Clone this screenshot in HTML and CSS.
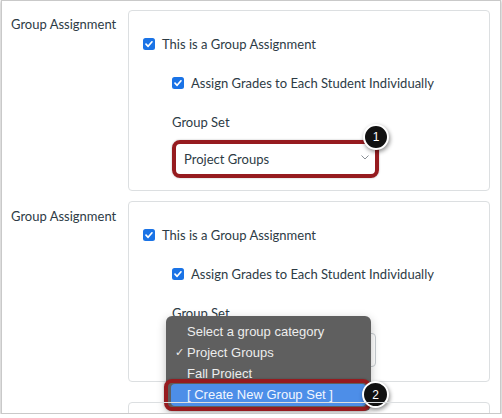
FILE: index.html
```html
<!DOCTYPE html>
<html>
<head>
<meta charset="utf-8">
<link rel="stylesheet" href="styles.css">
</head>
<body>
<div class="frame">
  <div class="row row1">
    <div class="label">Group Assignment</div>
    <div class="box">
      <div class="check lvl1">
        <svg class="cb" width="12" height="12" viewBox="0 0 12 12"><rect x="0" y="0" width="12" height="12" rx="2.5" fill="#1a73e6"/><path d="M3 6.2 L5.1 8.3 L9 3.8" fill="none" stroke="#fff" stroke-width="1.7" stroke-linecap="round" stroke-linejoin="round"/></svg>
        <span>This is a Group Assignment</span>
      </div>
      <div class="check lvl2">
        <svg class="cb" width="12" height="12" viewBox="0 0 12 12"><rect x="0" y="0" width="12" height="12" rx="2.5" fill="#1a73e6"/><path d="M3 6.2 L5.1 8.3 L9 3.8" fill="none" stroke="#fff" stroke-width="1.7" stroke-linecap="round" stroke-linejoin="round"/></svg>
        <span>Assign Grades to Each Student Individually</span>
      </div>
      <div class="setlabel">Group Set</div>
      <div class="selectwrap">
        <div class="select">
          <span>Project Groups</span>
          <svg class="chev" width="8" height="5" viewBox="0 0 8 5"><path d="M0.5 0.5 L4 4 L7.5 0.5" fill="none" stroke="#8a9096" stroke-width="1"/></svg>
        </div>
        <div class="ring ring1"></div>
        <div class="badge badge1">1</div>
      </div>
    </div>
  </div>

  <div class="row row2">
    <div class="label">Group Assignment</div>
    <div class="box">
      <div class="check lvl1">
        <svg class="cb" width="12" height="12" viewBox="0 0 12 12"><rect x="0" y="0" width="12" height="12" rx="2.5" fill="#1a73e6"/><path d="M3 6.2 L5.1 8.3 L9 3.8" fill="none" stroke="#fff" stroke-width="1.7" stroke-linecap="round" stroke-linejoin="round"/></svg>
        <span>This is a Group Assignment</span>
      </div>
      <div class="check lvl2">
        <svg class="cb" width="12" height="12" viewBox="0 0 12 12"><rect x="0" y="0" width="12" height="12" rx="2.5" fill="#1a73e6"/><path d="M3 6.2 L5.1 8.3 L9 3.8" fill="none" stroke="#fff" stroke-width="1.7" stroke-linecap="round" stroke-linejoin="round"/></svg>
        <span>Assign Grades to Each Student Individually</span>
      </div>
      <div class="setlabel">Group Set</div>
      <div class="selectwrap">
        <div class="select">
          <span>Project Groups</span>
          <svg class="chev" width="8" height="5" viewBox="0 0 8 5"><path d="M0.5 0.5 L4 4 L7.5 0.5" fill="none" stroke="#8a9096" stroke-width="1"/></svg>
        </div>
      </div>
      <div class="menu">
        <div class="item">Select a group category</div>
        <div class="item"><span class="tick">✓</span>Project Groups</div>
        <div class="item">Fall Project</div>
        <div class="item hl">[ Create New Group Set ]</div>
      </div>
      <div class="ring ring2"></div>
      <div class="badge badge2">2</div>
    </div>
  </div>

  <div class="row row3">
    <div class="label"></div>
    <div class="box"></div>
  </div>
</div>
</body>
</html>
```

FILE: styles.css
```css
html, body {
  margin: 0;
  padding: 0;
  background: #fff;
}
body {
  font-family: Lato, "Open Sans", sans-serif;
  color: #2d3b45;
}
.frame {
  margin-left: 1px;
  width: 498px;
  height: 412px;
  border: 1px solid #c9c9c9;
  overflow: hidden;
  box-shadow: 0 1px 3px rgba(0, 0, 0, 0.35);
  background: #fff;
  position: relative;
}
.row {
  display: grid;
  grid-template-columns: 126px 362px;
}
.row1 { margin-top: 9px; }
.row2 { margin-top: 10px; }
.row3 { margin-top: 20px; }
.label {
  font-size: 13px;
  line-height: 18px;
  padding-left: 9px;
  margin-top: 5px;
}
.row2 .label { margin-top: 6px; }
.box {
  position: relative;
  height: 181px;
  box-sizing: border-box;
  border: 1px solid #dcdfe1;
  border-radius: 4px;
  padding-top: 23px;
}
.row3 .box { height: 60px; }
.check {
  display: flex;
  align-items: center;
  gap: 7px;
  font-size: 13px;
  line-height: 20px;
}
.cb { flex: none; }
.lvl1 { margin-left: 14px; }
.lvl2 { margin-left: 43px; margin-top: 19px; }
.setlabel {
  margin-left: 43px;
  margin-top: 19px;
  font-size: 13px;
  line-height: 20px;
}
.selectwrap {
  position: relative;
  margin-left: 46px;
  margin-top: 10px;
  width: 201px;
}
.select {
  box-sizing: border-box;
  height: 34px;
  border: 1px solid #c7cdd1;
  border-radius: 4px;
  display: flex;
  align-items: center;
  justify-content: space-between;
  padding: 0 6px 0 8px;
  font-size: 13px;
}
.chev { margin-top: -3px; }
.ring {
  position: absolute;
  box-sizing: border-box;
  border: 4px solid #961b1f;
  border-radius: 8px;
  box-shadow: 0 0 2px rgba(0, 0, 0, 0.3);
}
.ring1 {
  left: -3px;
  top: -2px;
  width: 207px;
  height: 38px;
}
.badge {
  position: absolute;
  box-sizing: border-box;
  border-radius: 50%;
  background: #111;
  border: 2px solid #fff;
  color: #fff;
  font-family: "Liberation Sans", Arial, sans-serif;
  font-size: 12px;
  display: flex;
  align-items: center;
  justify-content: center;
  box-shadow: 1px 2px 4px rgba(0, 0, 0, 0.45);
}
.badge1 {
  width: 26px;
  height: 26px;
  left: 188px;
  top: -18px;
}
.menu {
  position: absolute;
  left: 37px;
  top: 114px;
  width: 205px;
  box-sizing: border-box;
  padding: 5px 0;
  background: #5f5f5f;
  border-radius: 6px;
  box-shadow: 0 3px 10px rgba(0, 0, 0, 0.25);
  font-family: "Liberation Sans", Arial, sans-serif;
  font-size: 13px;
  color: #ededed;
}
.item {
  position: relative;
  height: 21px;
  line-height: 21px;
  padding-left: 16px;
  margin: 0 5px;
  border-radius: 4px;
}
.item.hl {
  background: #4d8ee8;
  color: #f2f6ff;
  height: 22px;
  line-height: 22px;
}
.tick {
  position: absolute;
  left: 4px;
  top: 0;
  font-size: 11px;
}
.ring2 {
  left: 35px;
  top: 177px;
  width: 207px;
  height: 32px;
}
.badge2 {
  width: 27px;
  height: 27px;
  left: 233px;
  top: 179px;
}
```
